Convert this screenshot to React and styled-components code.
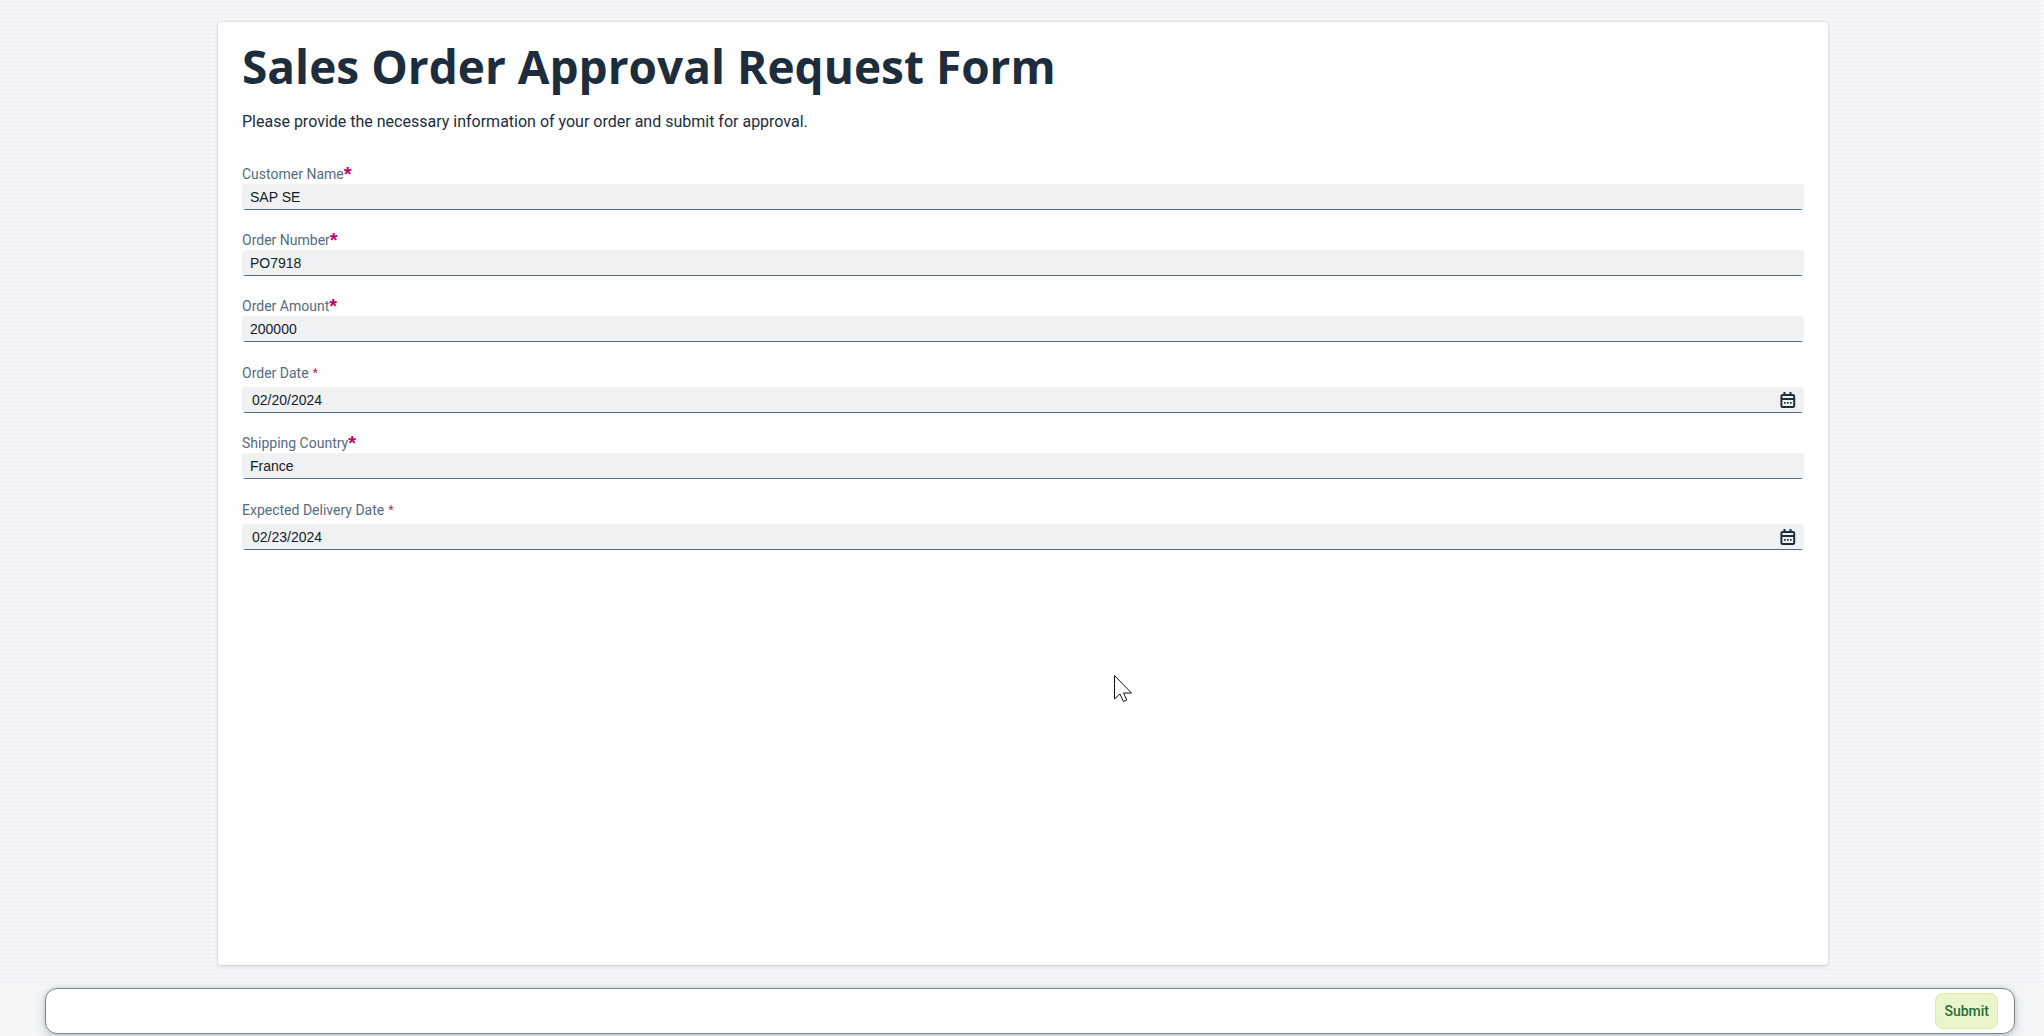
import React, { useId } from "react";
import styled, { createGlobalStyle } from "styled-components";

const GlobalStyle = createGlobalStyle`
  *, *::before, *::after { box-sizing: border-box; }
  body {
    margin: 0;
    background: #f5f6f7;
    color: #1d2d3e;
    font-family: Roboto, "Liberation Sans", sans-serif;
  }
`;

const Page = styled.form`
  min-height: 100vh;
  display: flex;
  flex-direction: column;
`;

const Canvas = styled.main`
  flex: 1;
  display: flex;
  padding: 22px 216px 21px 218px;
  background-image: conic-gradient(at 1px 1px, transparent 270deg, #dfe3e7 0);
  background-size: 4px 4px;
  background-position: 1px 1px;
`;

const Card = styled.section`
  flex: 1;
  padding: 12px 24px 24px;
  background: #fff;
  border-radius: 4px;
  box-shadow: 0 0 2px rgba(34, 54, 73, 0.2), 0 2px 4px rgba(34, 54, 73, 0.12);
`;

const Title = styled.h1`
  margin: 0;
  font: 700 46px/64px "Open Sans", "Noto Sans", sans-serif;
`;

const Intro = styled.p`
  margin: 12px 0 30px;
  font-size: 16px;
  line-height: 24px;
`;

const Fields = styled.div`
  display: flex;
  flex-direction: column;
  gap: 20px;
`;

const FieldGroup = styled.div`
  display: flex;
  flex-direction: column;
  gap: ${(p) => (p.$date ? 4 : 0)}px;
  padding-top: ${(p) => (p.$date ? 1 : 0)}px;
`;

const Label = styled.label`
  display: flex;
  gap: ${(p) => (p.$date ? 4 : 0)}px;
  color: #556b82;
  font-size: 14px;
  line-height: 20px;
`;

const Required = styled.span`
  color: #ba066c;
  font-family: "Liberation Sans", sans-serif;
  font-size: ${(p) => (p.$date ? 14 : 20)}px;
  font-weight: ${(p) => (p.$date ? 400 : 700)};
`;

const Control = styled.div`
  display: flex;
  align-items: center;
  height: 26px;
  border-radius: 4px;
  background: linear-gradient(#556b82, #556b82) bottom / 100% 1px no-repeat #eff1f2;
`;

const Input = styled.input`
  flex: 1;
  min-width: 0;
  height: 24px;
  padding: 0 8px 0 ${(p) => (p.$date ? 10 : 8)}px;
  border: 0;
  outline: 0;
  background: transparent;
  color: #131e29;
  font: 14px/20px "Liberation Sans", sans-serif;
`;

const IconButton = styled.button`
  display: flex;
  align-items: center;
  justify-content: center;
  width: 32px;
  height: 24px;
  padding: 0;
  border: 0;
  background: transparent;
  color: #1d2d3e;
`;

const Footer = styled.footer`
  display: flex;
  align-items: center;
  justify-content: flex-end;
  margin: 2px 29px 2px 45px;
  height: 46px;
  padding: 0 16px;
  border: 1px solid #788796;
  border-radius: 12px;
  background: #fff;
  box-shadow: 0 0 4px rgba(34, 54, 73, 0.15), 0 4px 12px rgba(34, 54, 73, 0.2);
`;

const SubmitButton = styled.button`
  height: 36px;
  padding: 0 8px;
  border: 1px solid #dbeb9f;
  border-radius: 8px;
  background: #ebf5cb;
  color: #256f3a;
  font: 500 14px/20px Roboto, sans-serif;
`;

const Pointer = styled.svg`
  position: absolute;
  top: 674px;
  left: 1113px;
  pointer-events: none;
`;

const CalendarIcon = () => (
  <svg width="16" height="16" viewBox="0 0 16 16" fill="none" stroke="currentColor" aria-hidden="true">
    <rect x="1.4" y="3" width="12.800" height="12" rx="1.200" strokeWidth="2" />
    <path d="M1 7h14" strokeWidth="2" />
    <path d="M4.500 0v4M10.500 0v4" strokeWidth="2" />
    <path d="M4 10.800h1.600M7 10.800h1.600M10 10.800h1.600" strokeWidth="1.800" />
  </svg>
);

const fields = [
  { label: "Customer Name", value: "SAP SE" },
  { label: "Order Number", value: "PO7918" },
  { label: "Order Amount", value: "200000" },
  { label: "Order Date", value: "02/20/2024", date: true },
  { label: "Shipping Country", value: "France" },
  { label: "Expected Delivery Date", value: "02/23/2024", date: true },
];

function Field({ label, value, date }) {
  const id = useId();
  return (
    <FieldGroup $date={date}>
      <Label htmlFor={id} $date={date}>
        {label}
        <Required $date={date}>*</Required>
      </Label>
      <Control>
        <Input id={id} type="text" defaultValue={value} required $date={date} />
        {date && (
          <IconButton type="button" aria-label="Open calendar">
            <CalendarIcon />
          </IconButton>
        )}
      </Control>
    </FieldGroup>
  );
}

export default function App() {
  return (
    <>
      <GlobalStyle />
      <Page onSubmit={(e) => e.preventDefault()}>
        <Canvas>
          <Card>
            <Title>Sales Order Approval Request Form</Title>
            <Intro>Please provide the necessary information of your order and submit for approval.</Intro>
            <Fields>
              {fields.map((f) => (
                <Field key={f.label} {...f} />
              ))}
            </Fields>
          </Card>
        </Canvas>
        <Footer>
          <SubmitButton type="submit">Submit</SubmitButton>
        </Footer>
      </Page>
      <Pointer width="20" height="30" viewBox="0 0 20 30" aria-hidden="true">
        <path d="M1.500 1.500v23.500l5.500-5 3.500 7.500 3.300-1.500-3.300-7h8Z" fill="#fff" stroke="#111" strokeWidth="1" />
      </Pointer>
    </>
  );
}
